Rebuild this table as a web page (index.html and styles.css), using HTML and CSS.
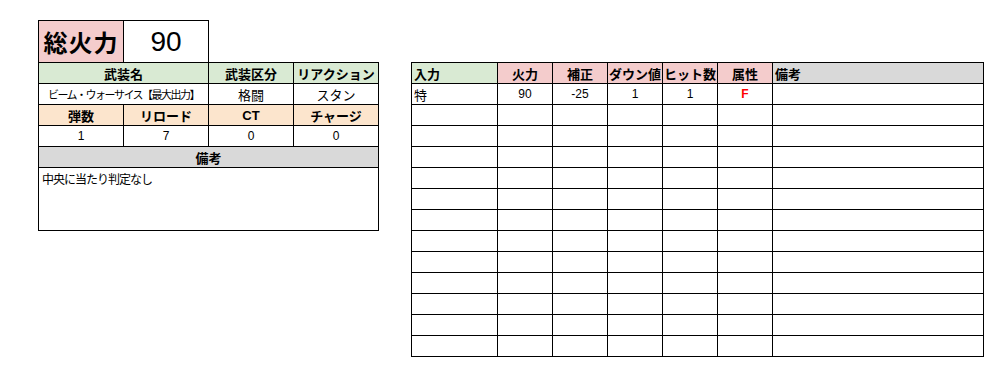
FILE: index.html
```html
<!DOCTYPE html>
<html>
<head>
    <meta charset="utf-8">
    <link rel="stylesheet" href="styles.css">
</head>
<body>
    <div class="sheet">
        <!-- 武装データ -->
        <table class="weapon">
            <colgroup>
                <col class="w85"><col class="w85"><col class="w85"><col class="w85">
            </colgroup>
            <tr class="total-row">
                <td class="total-label pink">総火力</td>
                <td class="total-value">90</td>
                <td class="blank"></td>
                <td class="blank"></td>
            </tr>
            <tr class="head green">
                <td colspan="2">武装名</td>
                <td>武装区分</td>
                <td>リアクション</td>
            </tr>
            <tr class="data">
                <td colspan="2" class="name">ビーム・ウォーサイス【最大出力】</td>
                <td>格闘</td>
                <td>スタン</td>
            </tr>
            <tr class="head peach">
                <td>弾数</td>
                <td>リロード</td>
                <td class="latin">CT</td>
                <td>チャージ</td>
            </tr>
            <tr class="data num">
                <td>1</td>
                <td>7</td>
                <td>0</td>
                <td>0</td>
            </tr>
            <tr class="head gray">
                <td colspan="4">備考</td>
            </tr>
            <tr class="memo-row">
                <td colspan="4" class="memo">中央に当たり判定なし</td>
            </tr>
        </table>

        <!-- 入力ごとのダメージ表 -->
        <div class="combo-wrap">
            <table class="combo">
                <colgroup>
                    <col class="c-input"><col class="c55"><col class="c55"><col class="c55">
                    <col class="c55"><col class="c55"><col class="c-note">
                </colgroup>
                <tr class="head">
                    <td class="green left">入力</td>
                    <td class="pink">火力</td>
                    <td class="pink">補正</td>
                    <td class="pink">ダウン値</td>
                    <td class="pink">ヒット数</td>
                    <td class="pink">属性</td>
                    <td class="gray left">備考</td>
                </tr>
                <tr class="data">
                    <td class="left">特</td>
                    <td class="num">90</td>
                    <td class="num">-25</td>
                    <td class="num">1</td>
                    <td class="num">1</td>
                    <td class="attr">F</td>
                    <td></td>
                </tr>
                <tr class="data"><td></td><td></td><td></td><td></td><td></td><td></td><td></td></tr>
                <tr class="data"><td></td><td></td><td></td><td></td><td></td><td></td><td></td></tr>
                <tr class="data"><td></td><td></td><td></td><td></td><td></td><td></td><td></td></tr>
                <tr class="data"><td></td><td></td><td></td><td></td><td></td><td></td><td></td></tr>
                <tr class="data"><td></td><td></td><td></td><td></td><td></td><td></td><td></td></tr>
                <tr class="data"><td></td><td></td><td></td><td></td><td></td><td></td><td></td></tr>
                <tr class="data"><td></td><td></td><td></td><td></td><td></td><td></td><td></td></tr>
                <tr class="data"><td></td><td></td><td></td><td></td><td></td><td></td><td></td></tr>
                <tr class="data"><td></td><td></td><td></td><td></td><td></td><td></td><td></td></tr>
                <tr class="data"><td></td><td></td><td></td><td></td><td></td><td></td><td></td></tr>
                <tr class="data"><td></td><td></td><td></td><td></td><td></td><td></td><td></td></tr>
                <tr class="data"><td></td><td></td><td></td><td></td><td></td><td></td><td></td></tr>
            </table>
        </div>
    </div>
</body>
</html>
```

FILE: styles.css
```css
body {
    margin: 0;
    background: #fff;
    color: #000;
    font-family: "Noto Sans CJK JP", sans-serif;
}

.sheet {
    display: flex;
    align-items: flex-start;
    gap: 32px;
    padding: 20px 0 0 38px;
}

table {
    border-collapse: collapse;
    table-layout: fixed;
}

td {
    border: 1px solid #000;
    padding: 0;
    text-align: center;
    vertical-align: middle;
    line-height: 1;
    white-space: nowrap;
    overflow: hidden;
}

.pink { background: #f4cccc; }
.green { background: #d9ead3; }
.peach { background: #fce5cd; }
.gray { background: #d9d9d9; }

/* left block */
.weapon { width: 341px; }
.w85 { width: 85px; }

.weapon tr { height: 21px; }
.weapon .total-row { height: 42px; }
.weapon .memo-row { height: 63px; }

.total-label {
    font-size: 24px;
    font-weight: bold;
    letter-spacing: 1px;
}

.total-value {
    font-family: "Liberation Sans", Arial, sans-serif;
    font-size: 28px;
}

.weapon td.blank {
    border: none;
    background: transparent;
}

.head td {
    font-size: 13px;
    font-weight: bold;
}

.head .latin {
    font-family: "Liberation Sans", Arial, sans-serif;
}

.data td {
    font-size: 13px;
}

.weapon .name {
    font-size: 11px;
    letter-spacing: -1.5px;
}

.num td,
td.num {
    font-family: "Liberation Sans", Arial, sans-serif;
    font-size: 12px;
}

.memo {
    text-align: left;
    vertical-align: top;
    padding: 5px 0 0 3px;
    font-size: 12px;
    letter-spacing: -1px;
}

/* right block */
.combo-wrap { padding-top: 42px; }
.combo { width: 572px; }
.combo tr { height: 21px; }
.c-input { width: 86px; }
.c55 { width: 55px; }
.c-note { width: 211px; }

.combo td.left {
    text-align: left;
    padding-left: 2px;
}

.combo .attr {
    color: #ff0000;
    font-family: "Liberation Sans", Arial, sans-serif;
    font-weight: bold;
    font-size: 12px;
}
```
